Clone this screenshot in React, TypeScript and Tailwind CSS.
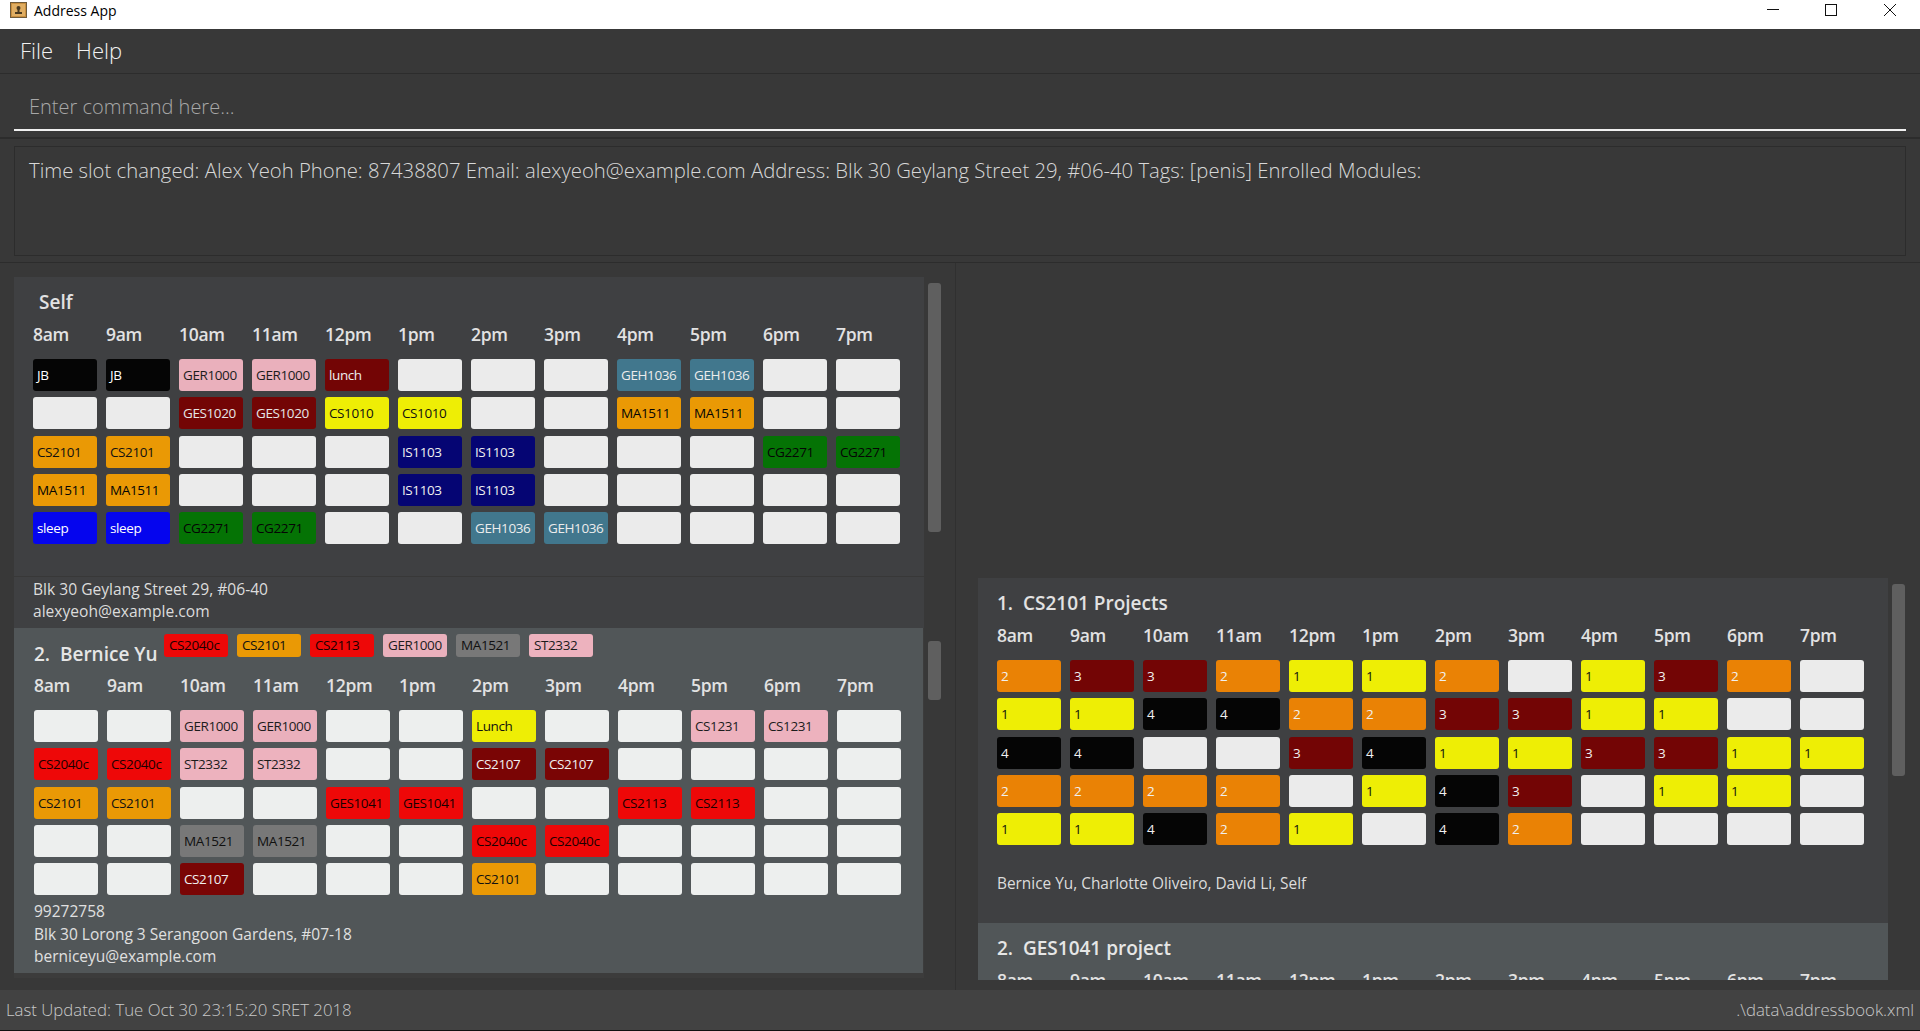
const HOURS = ['8am', '9am', '10am', '11am', '12pm', '1pm', '2pm', '3pm', '4pm', '5pm', '6pm', '7pm'];

const CELL_STYLES: Record<string, string> = {
  JB: 'bg-[#050505] text-white',
  GER1000: 'bg-[#eab0bc] text-[#1c1c1c]',
  lunch: 'bg-[#730505] text-[#eeeeee]',
  GES1020: 'bg-[#730505] text-[#e6e6e6]',
  CS1010: 'bg-[#eeee05] text-[#111111]',
  CS2101: 'bg-[#ea9905] text-[#111111]',
  MA1511: 'bg-[#ea9905] text-[#050505]',
  IS1103: 'bg-[#050573] text-[#f0f0f0]',
  sleep: 'bg-[#0505ee] text-white',
  CG2271: 'bg-[#057305] text-[#050505]',
  GEH1036: 'bg-[#41778d] text-[#ececec]',
  CS2040c: 'bg-[#ee0808] text-[#1a0000]',
  CS2113: 'bg-[#ee0808] text-[#1a0000]',
  GES1041: 'bg-[#ee0808] text-[#1a0000]',
  ST2332: 'bg-[#edb2be] text-[#1c1c1c]',
  CS1231: 'bg-[#edb2be] text-[#1c1c1c]',
  MA1521: 'bg-[#787878] text-[#101010]',
  CS2107: 'bg-[#7a0505] text-[#f0f0f0]',
  Lunch: 'bg-[#eeee05] text-[#111111]',
  '1': 'bg-[#eeee05] text-[#111111]',
  '2': 'bg-[#ea8205] text-[#f0f0f0]',
  '3': 'bg-[#730505] text-[#f0f0f0]',
  '4': 'bg-[#050505] text-[#f0f0f0]',
};

const selfRows = [
  ['JB', 'JB', 'GER1000', 'GER1000', 'lunch', '', '', '', 'GEH1036', 'GEH1036', '', ''],
  ['', '', 'GES1020', 'GES1020', 'CS1010', 'CS1010', '', '', 'MA1511', 'MA1511', '', ''],
  ['CS2101', 'CS2101', '', '', '', 'IS1103', 'IS1103', '', '', '', 'CG2271', 'CG2271'],
  ['MA1511', 'MA1511', '', '', '', 'IS1103', 'IS1103', '', '', '', '', ''],
  ['sleep', 'sleep', 'CG2271', 'CG2271', '', '', 'GEH1036', 'GEH1036', '', '', '', ''],
];

const berniceRows = [
  ['', '', 'GER1000', 'GER1000', '', '', 'Lunch', '', '', 'CS1231', 'CS1231', ''],
  ['CS2040c', 'CS2040c', 'ST2332', 'ST2332', '', '', 'CS2107', 'CS2107', '', '', '', ''],
  ['CS2101', 'CS2101', '', '', 'GES1041', 'GES1041', '', '', 'CS2113', 'CS2113', '', ''],
  ['', '', 'MA1521', 'MA1521', '', '', 'CS2040c', 'CS2040c', '', '', '', ''],
  ['', '', 'CS2107', '', '', '', 'CS2101', '', '', '', '', ''],
];

const projectRows = [
  ['2', '3', '3', '2', '1', '1', '2', '', '1', '3', '2', ''],
  ['1', '1', '4', '4', '2', '2', '3', '3', '1', '1', '', ''],
  ['4', '4', '', '', '3', '4', '1', '1', '3', '3', '1', '1'],
  ['2', '2', '2', '2', '', '1', '4', '3', '', '1', '1', ''],
  ['1', '1', '4', '2', '1', '', '4', '2', '', '', '', ''],
];

const berniceTags = ['CS2040c', 'CS2101', 'CS2113', 'GER1000', 'MA1521', 'ST2332'];

function HourHeader() {
  return (
    <div className="grid grid-cols-[repeat(12,64px)] gap-x-[9px]">
      {HOURS.map((hour) => (
        <div key={hour} className="h-[28px] text-[17.5px] leading-[26px] font-semibold tracking-[-0.3px] text-[#e2e2e2]">
          {hour}
        </div>
      ))}
    </div>
  );
}

function Timetable({ rows, empty }: { rows: string[][]; empty: string }) {
  return (
    <div className="grid grid-cols-[repeat(12,64px)] gap-x-[9px] gap-y-[6.25px]">
      {rows.flat().map((value, i) => (
        <div
          key={i}
          className={`h-[32px] rounded-[3px] pl-[4px] text-[13.5px] leading-[32px] tracking-[-0.4px] ${value ? CELL_STYLES[value] : empty}`}
        >
          {value}
        </div>
      ))}
    </div>
  );
}

function TitleBar() {
  return (
    <div className="flex h-[29px] items-start bg-white pt-[2px] pl-[10px] text-black">
      <svg width="17" height="16" viewBox="0 0 17 16">
        <rect x="0.5" y="0.5" width="16" height="15" fill="#c98f3f" stroke="#6e5a3a" />
        <rect x="2" y="2" width="13" height="12" fill="#e0ae63" />
        <circle cx="8.5" cy="6" r="2" fill="#4a3a20" />
        <rect x="7.5" y="7" width="2" height="3" fill="#4a3a20" />
        <rect x="5" y="10" width="7" height="2" fill="#4a3a20" />
      </svg>
      <span className="ml-[7px] text-[14px] leading-[17px]">Address App</span>
      <div className="ml-auto flex items-start pt-[1px]">
        <svg width="14" height="14" viewBox="0 0 14 14" className="mr-[44px]">
          <path d="M1 6.5H13" stroke="#111" />
        </svg>
        <svg width="14" height="14" viewBox="0 0 14 14" className="mr-[45px]">
          <rect x="1.5" y="1.5" width="11" height="11" fill="none" stroke="#111" />
        </svg>
        <svg width="14" height="14" viewBox="0 0 14 14" className="mr-[23px]">
          <path d="M1 1L13 13M13 1L1 13" stroke="#111" />
        </svg>
      </div>
    </div>
  );
}

function SelfCard() {
  return (
    <div className="bg-[#3f4042] pt-[12px] pb-[7px]">
      <div className="pl-[25px] text-[19px] leading-[26px] font-semibold text-[#e2e2e2]">Self</div>
      <div className="mt-[6px] pl-[19px]">
        <HourHeader />
        <div className="mt-[10px]">
          <Timetable rows={selfRows} empty="bg-[#ebebeb]" />
        </div>
      </div>
      <div className="mt-[32px] border-t border-[#383838] pt-[1px] pl-[19px] text-[15.6px] leading-[22px] text-[#dcdcdc]">
        <div>Blk 30 Geylang Street 29, #06-40</div>
        <div className="-mb-[1px]">alexyeoh@example.com</div>
      </div>
    </div>
  );
}

function BerniceCard() {
  return (
    <div className="mr-[1px] h-[345px] bg-[#515658] pl-[20px]">
      <div className="flex h-[44px] items-start">
        <div className="mt-[13px] w-[130px] text-[19px] leading-[26px] font-semibold whitespace-pre text-[#e6e6e6]">2.  Bernice Yu</div>
        <div className="mt-[6px] flex gap-x-[9px]">
          {berniceTags.map((tag) => (
            <div
              key={tag}
              className={`h-[23px] w-[64px] rounded-[3px] pl-[5px] text-[13.5px] leading-[22px] tracking-[-0.4px] ${CELL_STYLES[tag]}`}
            >
              {tag}
            </div>
          ))}
        </div>
      </div>
      <HourHeader />
      <div className="mt-[10px]">
        <Timetable rows={berniceRows} empty="bg-[#edefee]" />
      </div>
      <div className="mt-[5px] text-[15.5px] leading-[22.5px] text-[#e0e0e0]">
        <div>99272758</div>
        <div>Blk 30 Lorong 3 Serangoon Gardens, #07-18</div>
        <div>berniceyu@example.com</div>
      </div>
    </div>
  );
}

function ProjectCards() {
  return (
    <div className="h-[402px] w-[910px] overflow-hidden">
      <div className="h-[345px] bg-[#3f4042] pt-[12px] pl-[19px]">
        <div className="text-[19px] leading-[26px] font-semibold whitespace-pre text-[#e2e2e2]">1.  CS2101 Projects</div>
        <div className="mt-[6px]">
          <HourHeader />
        </div>
        <div className="mt-[10px]">
          <Timetable rows={projectRows} empty="bg-[#ebebeb]" />
        </div>
        <div className="mt-[28px] text-[15.4px] leading-[22px] text-[#dcdcdc]">Bernice Yu, Charlotte Oliveiro, David Li, Self</div>
      </div>
      <div className="h-[345px] bg-[#515658] pt-[12px] pl-[19px]">
        <div className="text-[19px] leading-[26px] font-semibold whitespace-pre text-[#e6e6e6]">2.  GES1041 project</div>
        <div className="mt-[6px]">
          <HourHeader />
        </div>
      </div>
    </div>
  );
}

export default function App() {
  return (
    <div className="flex h-[1031px] w-[1920px] flex-col overflow-hidden bg-[#383838] font-['Open_Sans',sans-serif]">
      <TitleBar />

      <div className="flex h-[44px] items-center gap-x-[23px] pb-[2px] pl-[20px] text-[22px] font-light text-[#f2f2f2]">
        <span>File</span>
        <span>Help</span>
      </div>

      <div className="h-[65px] border-y border-[#2c2c2c] px-[14px] pb-[6px]">
        <div className="h-full border-b-2 border-[#f0f0f0] pt-[19px] pl-[15px] text-[20px] leading-[28px] font-light text-[#a8a8a8]">
          Enter command here...
        </div>
      </div>

      <div className="h-[125px] border-y border-[#2c2c2c] pt-[7px] pr-[14px] pb-[6px] pl-[14px]">
        <div className="h-full border border-[#2c2c2c] pt-[9px] pl-[14px] text-[20.3px] leading-[28px] font-light text-[#d8d8d8]">
          Time slot changed: Alex Yeoh Phone: 87438807 Email: alexyeoh@example.com Address: Blk 30 Geylang Street 29, #06-40 Tags: [penis] Enrolled Modules:
        </div>
      </div>

      <div className="flex flex-1 overflow-hidden">
        <div className="flex w-[956px] shrink-0 border-r border-[#303030] pt-[14px] pl-[14px]">
          <div className="h-[701px] w-[910px] overflow-hidden bg-[#3c3c3c]">
            <SelfCard />
            <BerniceCard />
          </div>
          <div className="ml-[4px] w-[13px]">
            <div className="mt-[6px] h-[249px] rounded-[3px] bg-[#5f5f5f]" />
            <div className="mt-[109px] h-[59px] rounded-[3px] bg-[#5f5f5f]" />
          </div>
        </div>
        <div className="flex pt-[315px] pl-[22px]">
          <ProjectCards />
          <div className="mt-[6px] ml-[4px] h-[192px] w-[13px] rounded-[3px] bg-[#5f5f5f]" />
        </div>
      </div>

      <div className="flex h-[41px] items-center justify-between border-b border-[#111111] bg-[#424242] pr-[6px] pl-[6px] text-[16.8px] font-light text-[#c8c8c8]">
        <span>Last Updated: Tue Oct 30 23:15:20 SRET 2018</span>
        <span>.\data\addressbook.xml</span>
      </div>
    </div>
  );
}
